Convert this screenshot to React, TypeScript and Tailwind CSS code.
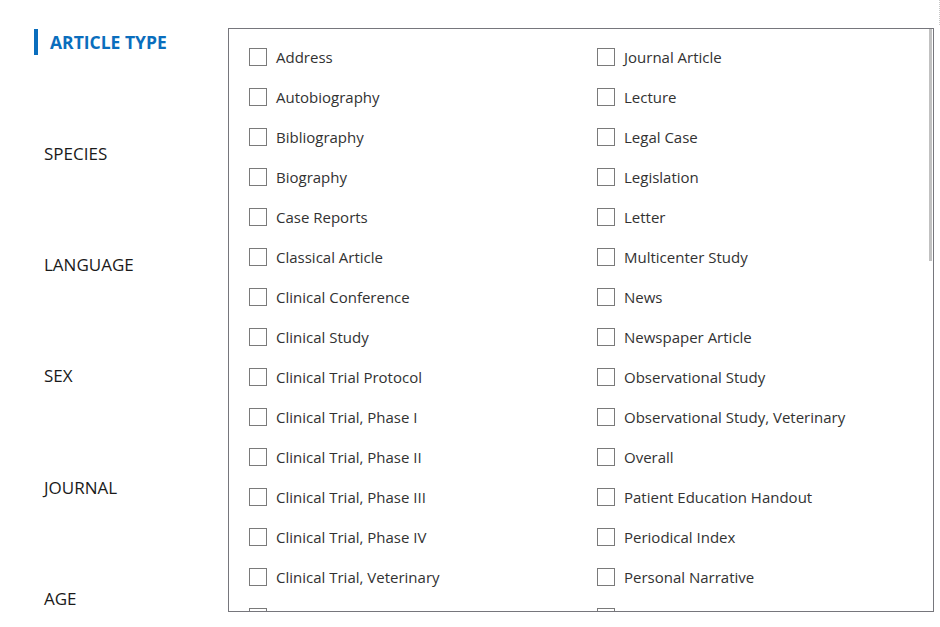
import React from "react";

const LEFT = [
  "Address", "Autobiography", "Bibliography", "Biography", "Case Reports",
  "Classical Article", "Clinical Conference", "Clinical Study", "Clinical Trial Protocol",
  "Clinical Trial, Phase I", "Clinical Trial, Phase II", "Clinical Trial, Phase III",
  "Clinical Trial, Phase IV", "Clinical Trial, Veterinary", "Comment", "Comparative Study",
];

const RIGHT = [
  "Journal Article", "Lecture", "Legal Case", "Legislation", "Letter",
  "Multicenter Study", "News", "Newspaper Article", "Observational Study",
  "Observational Study, Veterinary", "Overall", "Patient Education Handout",
  "Periodical Index", "Personal Narrative", "Portrait", "Practice Guideline",
];

const SECTIONS = ["ARTICLE TYPE", "SPECIES", "LANGUAGE", "SEX", "JOURNAL", "AGE"];

function Check({ label }: { label: string }) {
  return (
    <label className="flex items-center h-[40px] cursor-pointer">
      <span className="w-[18px] h-[18px] border border-[#7a7a7a] bg-white shrink-0" />
      <span className="ml-[9px] text-[15px] text-[#323232] whitespace-nowrap">{label}</span>
    </label>
  );
}

export default function App() {
  return (
    <div
      className="w-[940px] h-[627px] bg-white flex overflow-hidden"
      style={{ fontFamily: "'Open Sans', 'Noto Sans', sans-serif" }}
    >
      {/* Sidebar */}
      <div className="w-[228px] shrink-0 flex flex-col pt-[29px] gap-[85.4px]">
        {SECTIONS.map((s, i) =>
          i === 0 ? (
            <div key={s} className="h-[26px] flex items-center ml-[34px]">
              <span className="w-[4px] h-[26px] bg-[#0a6ebd]" />
              <span className="ml-[12px] text-[17.5px] font-bold text-[#0a6ebd]">{s}</span>
            </div>
          ) : (
            <div key={s} className="h-[26px] flex items-center ml-[44px] text-[17px] text-[#1a1a1a]">
              {s}
            </div>
          )
        )}
      </div>

      {/* Filter panel */}
      <div className="mt-[28px] w-[706px] h-[584px] border border-[#76767c] relative overflow-hidden shrink-0">
        <div className="flex pl-[20px] pt-[8px]">
          <div className="w-[348px] flex flex-col">
            {LEFT.map((l) => <Check key={l} label={l} />)}
          </div>
          <div className="flex flex-col">
            {RIGHT.map((l) => <Check key={l} label={l} />)}
          </div>
        </div>
        <div className="absolute right-[1px] top-0 w-[3px] h-[232px] bg-[#c1c1c1]" />
      </div>

      <div className="ml-[5px] h-[25px] border-l border-dotted border-[#c8c8c8]" />
    </div>
  );
}
